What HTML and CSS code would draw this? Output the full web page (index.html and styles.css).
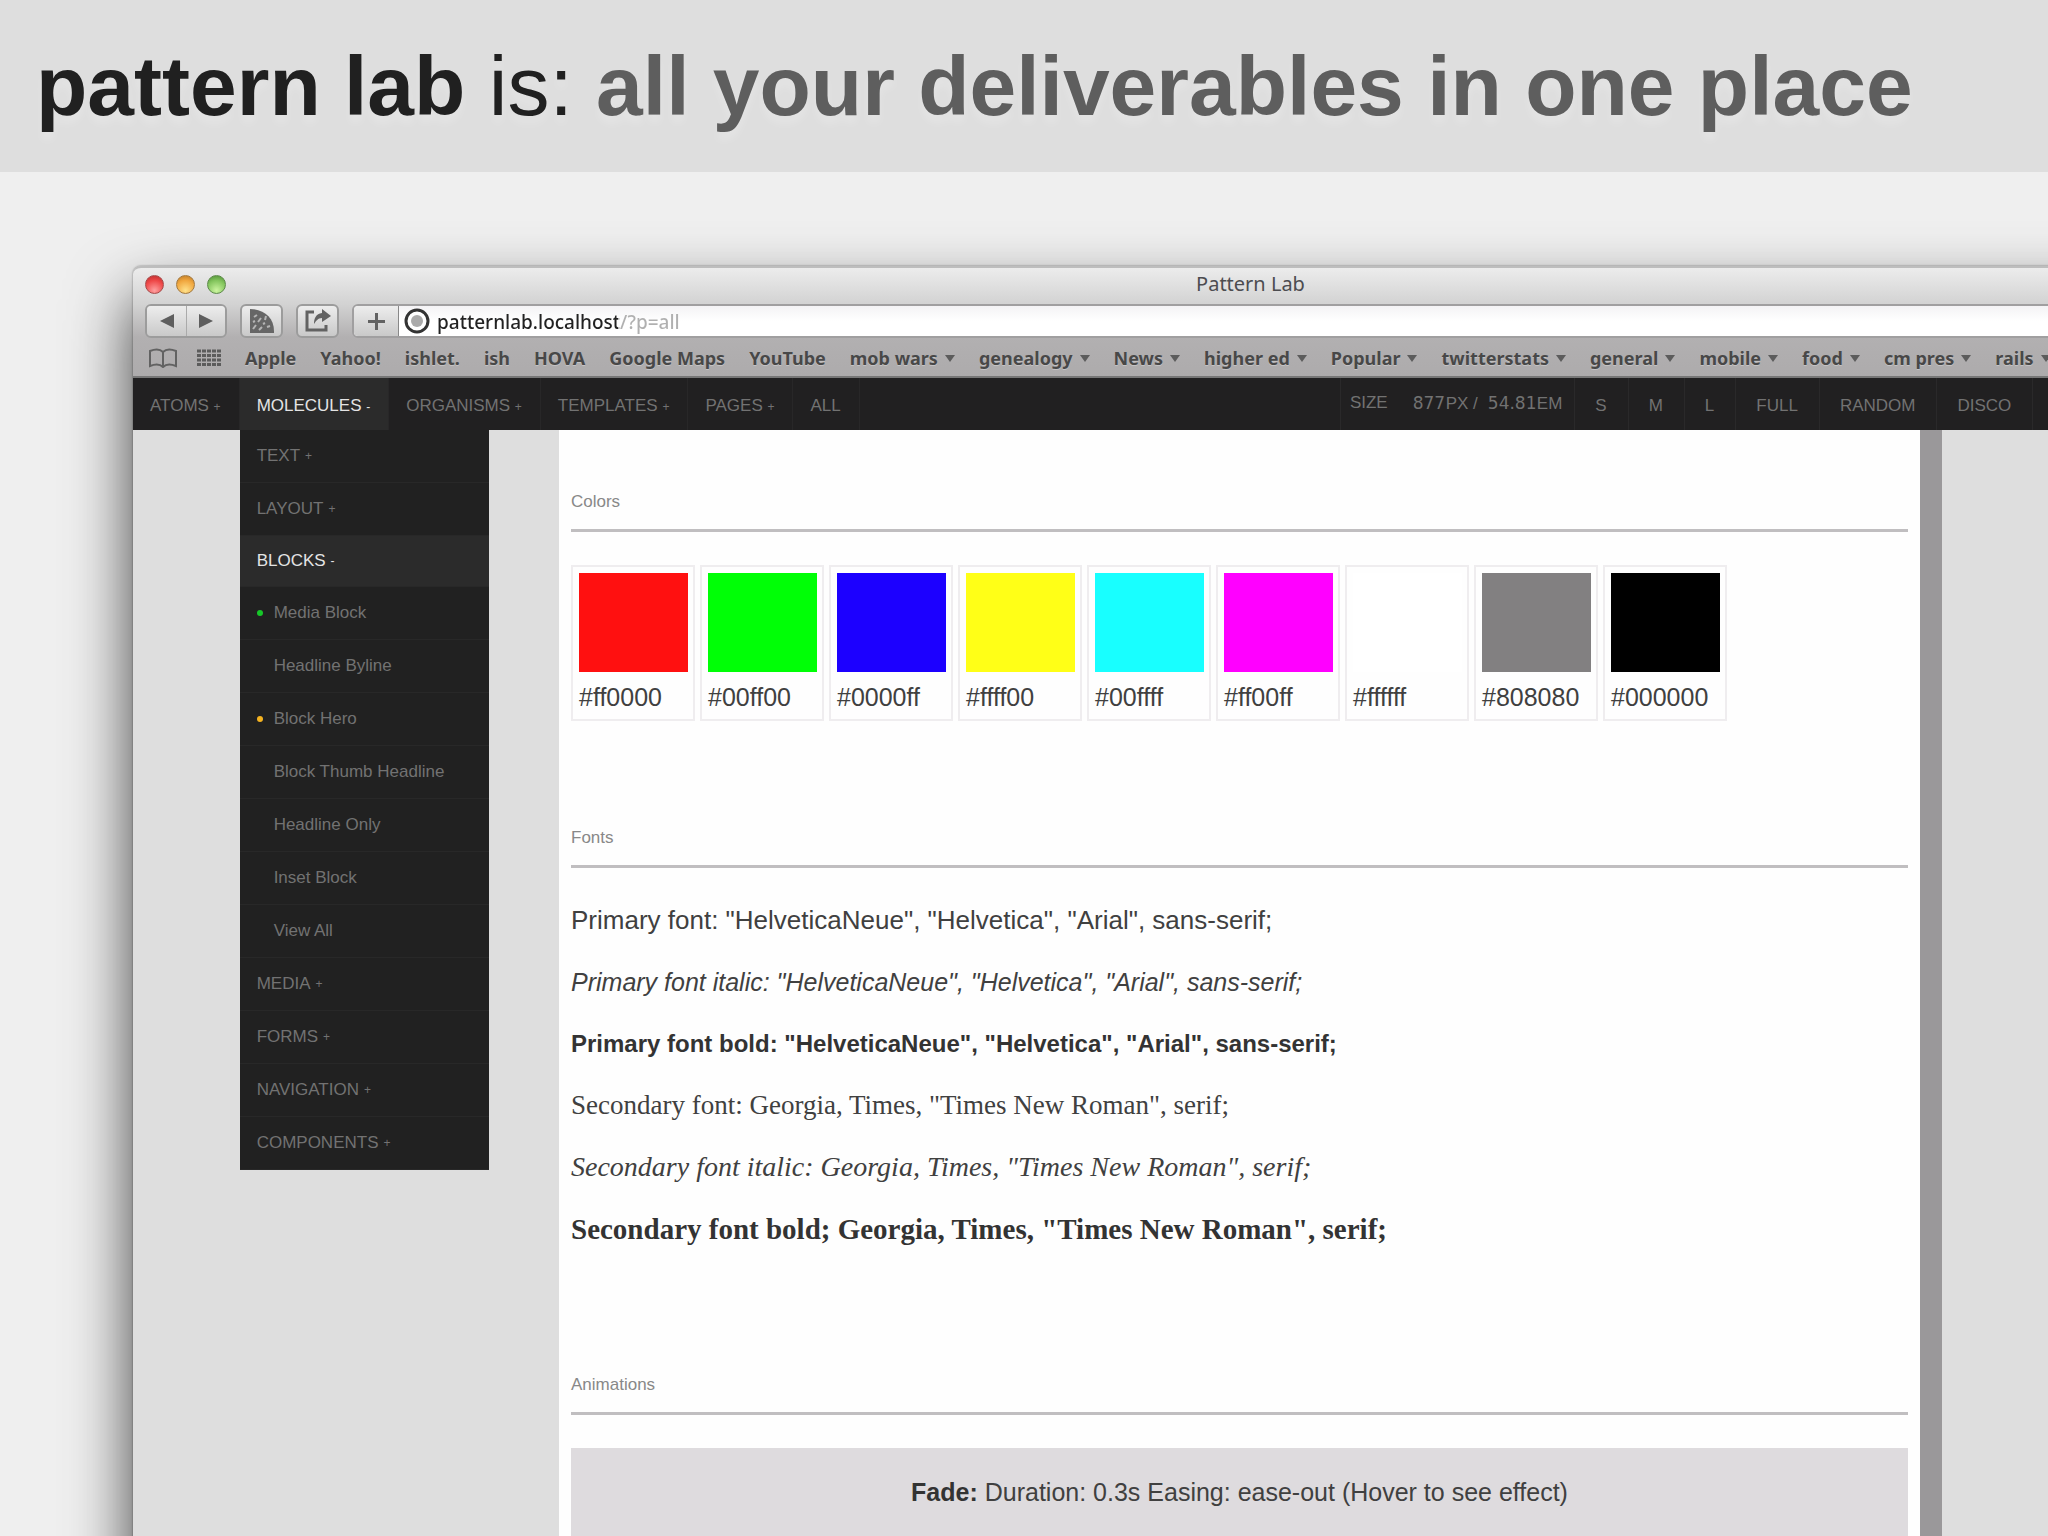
FILE: index.html
```html
<!DOCTYPE html>
<html lang="en">
<head>
<meta charset="utf-8">
<title>Pattern Lab</title>
<link rel="stylesheet" href="styles.css">
</head>
<body>
<header class="banner">
  <h1 class="banner-title"><strong>pattern lab</strong> is: <strong class="banner-claim">all your deliverables in one place</strong></h1>
</header>
<main class="stage">
  <div class="window">
    <div class="chrome">
      <div class="titlebar">
        <div class="lights">
          <button class="light light-close" aria-label="Close"></button>
          <button class="light light-min" aria-label="Minimise"></button>
          <button class="light light-zoom" aria-label="Zoom"></button>
        </div>
        <p class="window-title">Pattern Lab</p>
      </div>
      <div class="toolbar">
        <div class="history">
          <button class="tool" aria-label="Back"><svg width="14" height="14" viewBox="0 0 16 16"><path d="M16 0v16L0 8z" fill="#5e5e5e"/></svg></button>
          <button class="tool" aria-label="Forward"><svg width="14" height="14" viewBox="0 0 16 16"><path d="M0 0v16l16-8z" fill="#5e5e5e"/></svg></button>
        </div>
        <button class="tool tool-single" aria-label="Readability"><svg width="26" height="26" viewBox="0 0 26 26"><path d="M1 1c14 0 24 9 24 22v2H1z" fill="#666"/><path d="M4 21l3-4M9 14l3-4M10 22l3-3M5 9l3-2M16 12l1-4M18 19l3-1M14 16l2-1M4 14l2-1" stroke="#b5b5b5" stroke-width="2" fill="none"/></svg></button>
        <button class="tool tool-single" aria-label="Share"><svg width="26" height="24" viewBox="0 0 26 24"><path d="M9 3H2v18h19v-5" fill="none" stroke="#626262" stroke-width="3"/><path d="M17 0l9 7-9 6V9c-4 0-6 3-8 6 0-6 2-10 8-11z" fill="#626262"/></svg></button>
        <div class="address">
          <button class="tool tool-add" aria-label="Add bookmark"><svg width="17" height="17" viewBox="0 0 17 17"><path d="M8.500 0v17M0 8.500h17" stroke="#626262" stroke-width="3"/></svg></button>
          <svg class="favicon" width="26" height="26" viewBox="0 0 26 26"><circle cx="13" cy="13" r="11" fill="#fff" stroke="#333" stroke-width="3"/><circle cx="13" cy="13" r="6" fill="#aaa"/></svg>
          <input class="url" type="text" aria-label="Address" value="patternlab.localhost/?p=all">
        </div>
      </div>
      <nav class="bookmarks" aria-label="Bookmarks">
        <button class="mark-icon" aria-label="Show bookmarks"><svg width="28" height="20" viewBox="0 0 28 20"><path d="M14 4C11 1 6 1 1 3v15c5-2 10-2 13 1 3-3 8-3 13-1V3C22 1 17 1 14 4zv15" fill="none" stroke="#626262" stroke-width="2"/></svg></button>
        <button class="mark-icon" aria-label="Top sites"><svg width="24" height="18" viewBox="0 0 24 18"><path d="M0 2h24M0 6.500h24M0 11h24M0 15.500h24" stroke="#5c5c5c" stroke-width="3" stroke-dasharray="4 1"/></svg></button>
        <a href="#">Apple</a>
        <a href="#">Yahoo!</a>
        <a href="#">ishlet.</a>
        <a href="#">ish</a>
        <a href="#">HOVA</a>
        <a href="#">Google Maps</a>
        <a href="#">YouTube</a>
        <a href="#" class="folder">mob wars</a>
        <a href="#" class="folder">genealogy</a>
        <a href="#" class="folder">News</a>
        <a href="#" class="folder">higher ed</a>
        <a href="#" class="folder">Popular</a>
        <a href="#" class="folder">twitterstats</a>
        <a href="#" class="folder">general</a>
        <a href="#" class="folder">mobile</a>
        <a href="#" class="folder">food</a>
        <a href="#" class="folder">cm pres</a>
        <a href="#" class="folder">rails</a>
      </nav>
    </div>
    <div class="labnav">
      <ul class="patterns">
        <li><a href="#">ATOMS <small>+</small></a></li>
        <li class="open"><a href="#">MOLECULES <small>-</small></a>
          <ul class="menu">
            <li><a href="#">TEXT <small>+</small></a></li>
            <li><a href="#">LAYOUT <small>+</small></a></li>
            <li class="current"><a href="#">BLOCKS <small>-</small></a>
              <ul class="submenu">
                <li><a href="#" class="done">Media Block</a></li>
                <li><a href="#">Headline Byline</a></li>
                <li><a href="#" class="review">Block Hero</a></li>
                <li><a href="#">Block Thumb Headline</a></li>
                <li><a href="#">Headline Only</a></li>
                <li><a href="#">Inset Block</a></li>
                <li><a href="#">View All</a></li>
              </ul>
            </li>
            <li><a href="#">MEDIA <small>+</small></a></li>
            <li><a href="#">FORMS <small>+</small></a></li>
            <li><a href="#">NAVIGATION <small>+</small></a></li>
            <li><a href="#">COMPONENTS <small>+</small></a></li>
          </ul>
        </li>
        <li><a href="#">ORGANISMS <small>+</small></a></li>
        <li><a href="#">TEMPLATES <small>+</small></a></li>
        <li><a href="#">PAGES <small>+</small></a></li>
        <li><a href="#">ALL</a></li>
      </ul>
      <div class="sizes">
        <div class="size">
          <span>SIZE</span>
          <label class="reading"><input class="px" type="text" value="877">PX /</label>
          <label class="reading"><input class="em" type="text" value="54.81">EM</label>
        </div>
        <button>S</button>
        <button>M</button>
        <button>L</button>
        <button>FULL</button>
        <button>RANDOM</button>
        <button>DISCO</button>
        <span></span>
      </div>
    </div>
    <div class="viewport">
      <div class="page">
        <section class="section">
          <h2>Colors</h2>
          <ul class="swatches">
            <li><span class="chip" style="background:#ff1010"></span>#ff0000</li>
            <li><span class="chip" style="background:#00ff06"></span>#00ff00</li>
            <li><span class="chip" style="background:#1c00ff"></span>#0000ff</li>
            <li><span class="chip" style="background:#ffff17"></span>#ffff00</li>
            <li><span class="chip" style="background:#18ffff"></span>#00ffff</li>
            <li><span class="chip" style="background:#ff00ff"></span>#ff00ff</li>
            <li><span class="chip" style="background:#ffffff"></span>#ffffff</li>
            <li><span class="chip" style="background:#828081"></span>#808080</li>
            <li><span class="chip" style="background:#000000"></span>#000000</li>
          </ul>
        </section>
        <section class="section fonts">
          <h2>Fonts</h2>
          <p class="primary">Primary font: "HelveticaNeue", "Helvetica", "Arial", sans-serif;</p>
          <p><em>Primary font italic: "HelveticaNeue", "Helvetica", "Arial", sans-serif;</em></p>
          <p class="primary-bold">Primary font bold: "HelveticaNeue", "Helvetica", "Arial", sans-serif;</p>
          <p class="secondary">Secondary font: Georgia, Times, "Times New Roman", serif;</p>
          <p class="secondary secondary-italic">Secondary font italic: Georgia, Times, "Times New Roman", serif;</p>
          <p class="secondary secondary-bold">Secondary font bold; Georgia, Times, "Times New Roman", serif;</p>
        </section>
        <section class="section">
          <h2>Animations</h2>
          <p class="demo"><strong>Fade:</strong> Duration: 0.3s Easing: ease-out (Hover to see effect)</p>
        </section>
      </div>
    </div>
  </div>
</main>
</body>
</html>
```
FILE: styles.css
```css
* { box-sizing: border-box; }
body, h1, h2, p, ul { margin: 0; padding: 0; }
ul { list-style: none; }
a { color: inherit; text-decoration: none; }
button { margin: 0; padding: 0; border: 0; background: none; font: inherit; color: inherit; }
svg { display: block; }

body {
  display: flex;
  flex-direction: column;
  height: 100vh;
  overflow: hidden;
  background: #efefef;
  color: #404040;
  font: 25px/32px "Liberation Sans", Arial, sans-serif;
}

/* Slide heading */
.banner {
  flex: none;
  padding: 36px;
  background: #dedede;
}
.banner-title {
  color: #202020;
  font-size: 84px;
  line-height: 100px;
  font-weight: 400;
  white-space: nowrap;
  text-shadow: 0 8px 8px rgba(255, 255, 255, .2);
}
.banner-claim { color: #5e5e5e; }

/* Browser window, running off the right and bottom edges */
.stage {
  flex: 1;
  display: flex;
  min-height: 0;
  padding: 94px 0 0 133px;
  overflow: hidden;
}
.window {
  flex: 1;
  display: flex;
  flex-direction: column;
  align-self: flex-start;
  min-height: 120%;
  margin-right: -320px;
  border-radius: 8px 8px 0 0;
  background: #dedede;
  box-shadow: 0 0 2px rgba(0, 0, 0, .5), 0 32px 64px rgba(0, 0, 0, .75);
}

.chrome {
  height: 112px;
  padding: 0 12px;
  border-top: 2px solid #bdbdbd;
  border-bottom: 2px solid #777;
  border-radius: 8px 8px 0 0;
  background: linear-gradient(#ececec, #d2d2d2 34%, #b2b0b1 64%, #adabac);
  font-family: "Noto Sans", "Open Sans", sans-serif;
}
.titlebar {
  display: grid;
  grid-template-columns: 1fr auto 1fr;
  align-items: center;
  height: 32px;
  margin-bottom: 4px;
}
.lights { display: flex; gap: 12px; }
.light {
  width: 19px;
  height: 19px;
  border: 1px solid #777;
  border-radius: 50%;
}
.light-close { background: radial-gradient(circle at 50% 85%, #ffa0a0, #ee4747 60%, #b62c2c); border-color: #a64a4a; }
.light-min { background: radial-gradient(circle at 50% 85%, #ffe18a, #f0a63e 60%, #b87522); border-color: #a3793e; }
.light-zoom { background: radial-gradient(circle at 50% 85%, #ccf5a0, #82c45c 60%, #4d8a33); border-color: #5c8a49; }
.window-title { color: #4c4c50; font-size: 20px; line-height: 28px; }

.toolbar { display: flex; gap: 13px; height: 34px; }
.tool {
  display: grid;
  place-items: center;
  width: 41px;
  height: 33px;
  background: linear-gradient(#ededed, #c9c9c9);
}
.tool + .tool { border-left: 1px solid #aaa; }
.history { display: flex; overflow: hidden; height: 34px; border: 2px solid #9c9c9c; border-radius: 6px; }
.history .tool { width: 39px; height: 30px; }
.toolbar .tool-single { width: 43px; height: 34px; border: 2px solid #9c9c9c; border-radius: 6px; }
.address {
  display: flex;
  align-items: center;
  flex: 1;
  height: 34px;
  border: 2px solid #a09fa0;
  border-radius: 6px;
  background: linear-gradient(#f4f3f5, #fff 50%);
  overflow: hidden;
}
.tool-add { width: 45px; height: 30px; border-right: 1px solid #888; }
.favicon { margin: 0 7px 0 5px; }
.url {
  flex: 1;
  height: 30px;
  padding: 2px 0 0;
  border: 0;
  outline: 0;
  background: linear-gradient(90deg, #222 181px, #b0b0b0 181px);
  -webkit-background-clip: text;
  background-clip: text;
  color: transparent;
  font: 500 19px/28px "Noto Sans", "Open Sans", sans-serif;
}

.bookmarks {
  display: flex;
  align-items: center;
  gap: 24px;
  height: 40px;
  padding-left: 4px;
  color: #484848;
  font-size: 18px;
  line-height: 24px;
  font-weight: 700;
  white-space: nowrap;
  text-shadow: 0 1px 0 rgba(255, 255, 255, .3);
  overflow: hidden;
}
.mark-icon { flex: none; }
.mark-icon + .mark-icon { margin-left: -4px; }
.folder { display: flex; align-items: center; gap: 7px; }
.folder::after {
  content: "";
  border: 5px solid transparent;
  border-top: 7px solid #5c5c5c;
  border-bottom: 0;
}

/* Pattern Lab bar */
.labnav {
  display: flex;
  height: 52px;
  background: #212021;
  color: #727272;
  font-size: 17px;
  line-height: 24px;
  white-space: nowrap;
}
.labnav small { font-size: 12px; }
.patterns { display: flex; flex: 0 0 54%; }
.patterns > li { position: relative; border-right: 1px solid #282728; }
.patterns > li > a { display: block; padding: 16px 18px 12px 17px; }
.patterns > .open { background: #2b2b2b; }
.patterns > .open > a, .current > a { color: #e4e4e4; }
.menu {
  position: absolute;
  top: 52px;
  left: 0;
  z-index: 1;
  width: 249px;
  background: #212121;
}
.menu a {
  display: flex;
  align-items: center;
  height: 53px;
  padding: 0 17px;
  gap: 5px;
  border-bottom: 1px solid #282828;
}
.menu .current > a { background: #2b2b2b; height: 51px; }
.submenu a { padding-left: 34px; }
.submenu .done, .submenu .review { padding-left: 17px; gap: 11px; }
.done::before, .review::before {
  content: "";
  width: 6px;
  height: 6px;
  border-radius: 50%;
  background: #16c828;
}
.review::before { background: #f5b320; }

.sizes { display: flex; }
.sizes > * { border-left: 1px solid #2a292a; }
.size { display: flex; padding: 13px 12px 0 9px; }
.size .reading { display: flex; align-items: baseline; height: 24px; margin-left: 10px; }
.size span + .reading { margin-left: 25px; }
.size input {
  height: 24px;
  padding: 0;
  border: 0;
  outline: 0;
  background: none;
  color: inherit;
  font: 17px/24px "DejaVu Sans", Verdana, sans-serif;
}
.size .px { width: 33px; }
.size .em { width: 49px; }
.sizes button { padding: 4px 21px 0 20px; }

/* Style guide page */
.viewport { flex: 1; display: flex; justify-content: center; }
.page {
  width: 1383px;
  padding: 58px 12px 0;
  border-right: 22px solid #9a989a;
  background: #fefefe;
}
.section h2 {
  margin-bottom: 33px;
  padding-bottom: 13px;
  border-bottom: 3px solid #c0bec0;
  color: #888;
  font-size: 17px;
  line-height: 28px;
  font-weight: 400;
}
.swatches { display: flex; gap: 5px; margin-bottom: 103px; }
.swatches li {
  width: 124px;
  height: 156px;
  padding: 6px 6px 0;
  border: 2px solid #efedef;
  line-height: 50px;
}
.chip { display: block; width: 109px; height: 99px; }
.fonts { padding-bottom: 98px; }
.fonts p { height: 62px; padding-top: 3px; }
.fonts .primary { font-size: 26px; }
.fonts .primary-bold { color: #333; font-size: 24px; font-weight: 700; }
.fonts .secondary {
  padding-top: 2px;
  font-family: "Liberation Serif", "Times New Roman", serif;
  font-size: 27px;
}
.fonts .secondary-italic { font-size: 28px; font-style: italic; }
.fonts .secondary-bold { color: #333; font-size: 29px; font-weight: 700; }
.demo { padding: 28px; background: #dedbde; text-align: center; }
.demo strong { color: #333; }
```
